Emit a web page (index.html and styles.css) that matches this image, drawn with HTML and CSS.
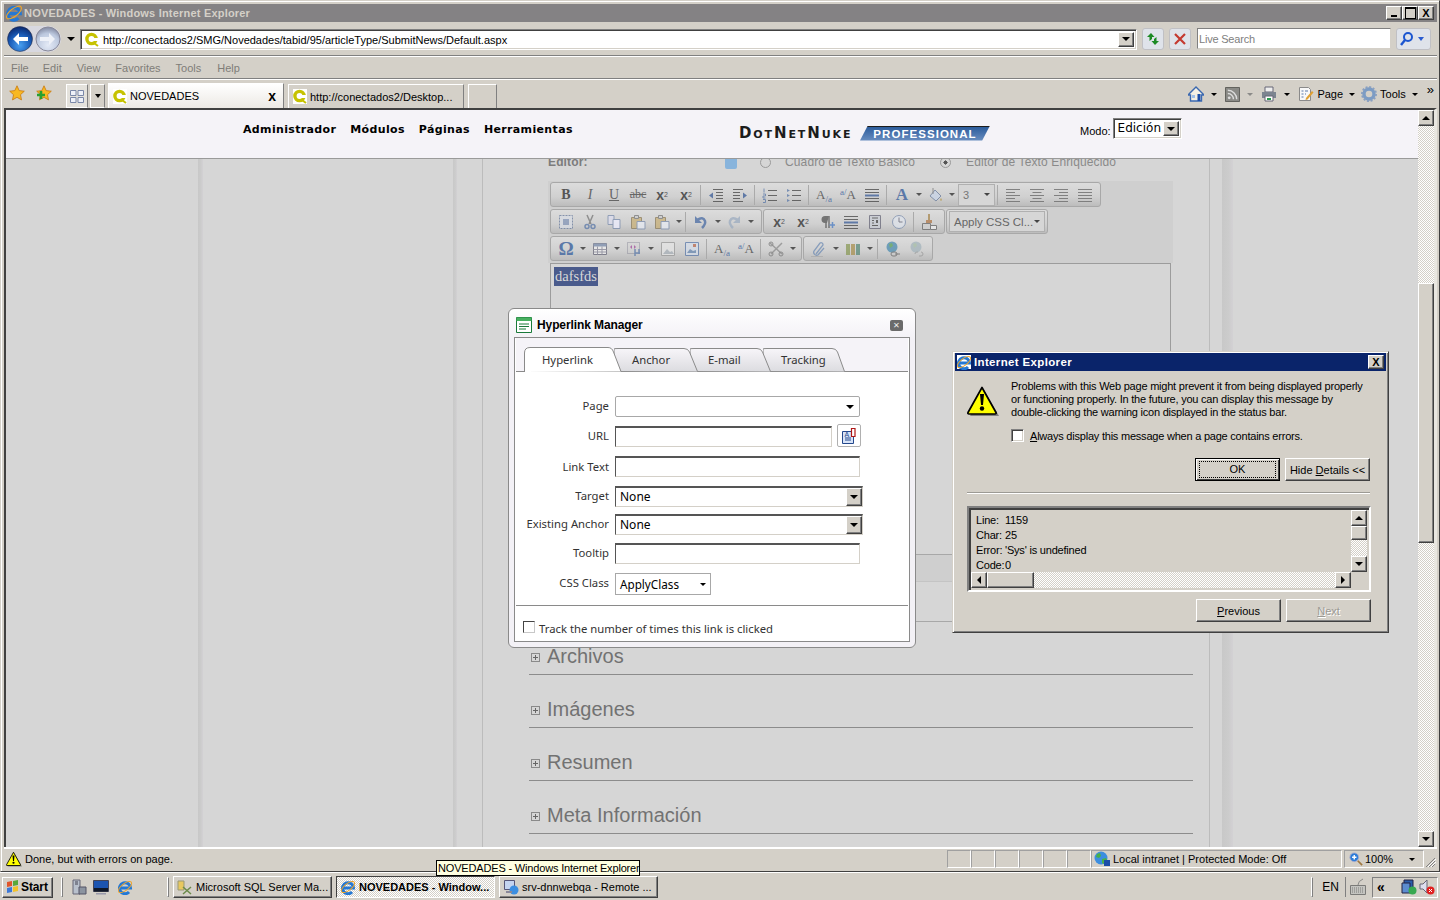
FILE: index.html
```html
<!DOCTYPE html>
<html lang="en">
<head>
    <meta charset="UTF-8">
    <title>NOVEDADES - Windows Internet Explorer</title>
    <link rel="stylesheet" href="styles.css">
</head>
<body>

<!-- icon sheet -->
<svg class="sprites" aria-hidden="true">
    <defs>
        <linearGradient id="tabfill" x1="0" y1="0" x2="0" y2="1"><stop offset="0" stop-color="#f7f5f9"/><stop offset="1" stop-color="#dcdce0"/></linearGradient>
        <radialGradient id="backfill" cx=".5" cy=".75" r=".7"><stop offset="0" stop-color="#4aa0f0"/><stop offset=".6" stop-color="#1a5cb8"/><stop offset="1" stop-color="#0c2f78"/></radialGradient>
        <radialGradient id="fwdfill" cx=".5" cy=".75" r=".7"><stop offset="0" stop-color="#e4eaf6"/><stop offset=".7" stop-color="#bcc8de"/><stop offset="1" stop-color="#8c94ac"/></radialGradient>
    </defs>
    <symbol id="ie" viewBox="0 0 16 16">
        <path d="M3.500 9h10A5.500 5.500 0 1 0 12 13" fill="none" stroke="#2478d4" stroke-width="3"/>
        <ellipse cx="8" cy="8" rx="8" ry="3.400" transform="rotate(-38 8 8)" fill="none" stroke="#eea42c" stroke-width="1"/>
    </symbol>
    <symbol id="fav" viewBox="0 0 14 15">
        <rect width="14" height="15" fill="#fff"/>
        <circle cx="6.500" cy="7" r="4.600" fill="#fff" stroke="#c6c200" stroke-width="3.400"/>
        <path d="M8 6h6v3H8z" fill="#fff"/>
        <path d="M9 11l4 3" stroke="#c6c200" stroke-width="2"/>
    </symbol>
    <symbol id="star" viewBox="0 0 16 16">
        <path d="M8 .8l2.200 4.800 5.100.6-3.800 3.500 1 5.200L8 12.300l-4.500 2.600 1-5.200L.7 6.200l5.100-.6z" fill="#f8b822" stroke="#c87810" stroke-width=".8"/>
    </symbol>
    <symbol id="warn" viewBox="0 0 32 32">
        <path d="M17 5L32 31H3z" fill="#808080"/>
        <path d="M15 2.500L29 27.500Q29.500 29 28 29H2Q.5 29 1 27.500z" fill="#ff0" stroke="#000" stroke-width="1.700" stroke-linejoin="round"/>
        <path d="M13 9h4l-1 11h-2z" fill="#000"/>
        <circle cx="15" cy="23.500" r="2.200" fill="#000"/>
    </symbol>
    <symbol id="globe" viewBox="0 0 16 16">
        <circle cx="7" cy="7" r="6.500" fill="#3c8ee0"/>
        <path d="M3 3l3-1 1 3-2 2-3-1zM8 8l4-1 1 2-3 4-2-1z" fill="#48b048"/>
        <path d="M10 9h6v6h-6z" fill="#1c4ea8"/>
    </symbol>
    <symbol id="l-left" viewBox="0 0 16 16"><path d="M1 2.500h14M1 5.500h9M1 8.500h14M1 11.500h9M1 14.500h14" stroke="#666"/></symbol>
    <symbol id="l-center" viewBox="0 0 16 16"><path d="M1 2.500h14M3.500 5.500h9M1 8.500h14M3.500 11.500h9M1 14.500h14" stroke="#666"/></symbol>
    <symbol id="l-right" viewBox="0 0 16 16"><path d="M1 2.500h14M6 5.500h9M1 8.500h14M6 11.500h9M1 14.500h14" stroke="#666"/></symbol>
    <symbol id="l-just" viewBox="0 0 16 16"><path d="M1 2.500h14M1 5.500h14M1 8.500h14M1 11.500h14M1 14.500h14" stroke="#666"/></symbol>
    <symbol id="outdent" viewBox="0 0 16 16"><path d="M5 2.500h10M8 5.500h7M8 8.500h7M8 11.500h7M5 14.500h10" stroke="#444"/><path d="M1 8.500l4-3v6z" fill="#3a5c98"/></symbol>
    <symbol id="indent" viewBox="0 0 16 16"><path d="M1 2.500h10M1 5.500h7M1 8.500h7M1 11.500h7M1 14.500h10" stroke="#444"/><path d="M15 8.500l-4-3v6z" fill="#3a5c98"/></symbol>
    <symbol id="ol" viewBox="0 0 16 16"><path d="M6 3.500h9M6 8.500h9M6 13.500h9" stroke="#444"/><path d="M2 1.500v4M1 7h2.500v2H1v2h2.500M1 12.500h2.500v3H1" stroke="#5a78a8" fill="none"/></symbol>
    <symbol id="ul" viewBox="0 0 16 16"><path d="M6 3.500h9M6 8.500h9M6 13.500h9" stroke="#444"/><path d="M1 2l3 1.500L1 5zM1 7l3 1.500L1 10zM1 12l3 1.500L1 15z" fill="#5a78a8"/></symbol>
    <symbol id="align-mid" viewBox="0 0 16 16"><path d="M1 2.500h14M1 5.500h14M1 11.500h14M1 14.500h14" stroke="#444"/><path d="M1 8.500h14" stroke="#3a5c98" stroke-width="2"/></symbol>
    <symbol id="fill" viewBox="0 0 16 16"><path d="M3 9l5-6 6 6-5 5z" fill="#c8d4e8" stroke="#6a7c9c"/><path d="M6 1v6" stroke="#777"/><path d="M14 11q2 2 0 3-2-1 0-3" fill="#b8a060"/></symbol>
    <symbol id="select-all" viewBox="0 0 16 16"><path d="M1.500 1.500h13v13h-13z" fill="#d8dce4" stroke="#6a7c9c" stroke-dasharray="2 1"/><path d="M5 5h6v6H5z" fill="#8496b8"/></symbol>
    <symbol id="cut" viewBox="0 0 16 16"><path d="M5 1l4 9M11 1L7 10" stroke="#777" stroke-width="1.500"/><circle cx="5" cy="12.500" r="2" fill="none" stroke="#5a78a8" stroke-width="1.500"/><circle cx="11" cy="12.500" r="2" fill="none" stroke="#5a78a8" stroke-width="1.500"/></symbol>
    <symbol id="copy" viewBox="0 0 16 16"><path d="M2 1.500h6v9H2z" fill="#dde" stroke="#7a8cac"/><path d="M7 5.500h7v9H7z" fill="#eef" stroke="#7a8cac"/></symbol>
    <symbol id="paste" viewBox="0 0 16 16"><path d="M1.500 3.500h10v11h-10z" fill="#c8b078" stroke="#8a7a58"/><path d="M4.500 1.500h4v3h-4z" fill="#ccc" stroke="#777"/><path d="M7 7.500h8v7.500H7z" fill="#e8ecf4" stroke="#7a8cac"/></symbol>
    <symbol id="undo" viewBox="0 0 16 16"><path d="M4 6q6-4 8 1 1 3-3 7" fill="none" stroke="#4a6ca4" stroke-width="2.500"/><path d="M2 2v7h7z" fill="#4a6ca4"/></symbol>
    <symbol id="redo" viewBox="0 0 16 16"><path d="M12 6q-6-4-8 1-1 3 3 7" fill="none" stroke="#9cacc0" stroke-width="2.500"/><path d="M14 2v7H7z" fill="#9cacc0"/></symbol>
    <symbol id="para" viewBox="0 0 16 16"><path d="M7 2v12M10 2v12" stroke="#555" stroke-width="1.500"/><path d="M10 2H6a3 3 0 0 0 0 7h2" fill="#555"/><path d="M13.500 8v6M10.500 11h6" stroke="#4a7cc4" stroke-width="1.500"/></symbol>
    <symbol id="doc5" viewBox="0 0 16 16"><path d="M2.500 1.500h11v13h-11z" fill="#c8ccd4" stroke="#667"/><path d="M5 4h6M5 6.500h2M5 9h2M5 11.500h6" stroke="#444"/><path d="M9 6h2v3H9z" fill="#444"/></symbol>
    <symbol id="clock" viewBox="0 0 16 16"><circle cx="8" cy="8" r="6.500" fill="#dfe4ec" stroke="#7a8cac"/><path d="M8 3.500V8h3.500" fill="none" stroke="#667"/></symbol>
    <symbol id="brush" viewBox="0 0 16 16"><path d="M7 0h2v6H7z" fill="#a88850"/><path d="M5 6h6v3H5z" fill="#b07848"/><path d="M1.500 9.500h8v6h-8z" fill="#d0d0d0" stroke="#666"/><path d="M9.500 11.500h6v4h-6z" fill="#eee" stroke="#666"/></symbol>
    <symbol id="table" viewBox="0 0 16 16"><path d="M1.500 2.500h13v11h-13z" fill="#eee" stroke="#667"/><path d="M1.500 2.500h13v3h-13z" fill="#7a8cac"/><path d="M1.500 8.500h13M1.500 11h13M5.500 5.500v8M10 5.500v8" stroke="#889"/></symbol>
    <symbol id="flash" viewBox="0 0 16 16"><path d="M1.500 1.500h12v11h-12z" fill="none" stroke="#778" stroke-dasharray="1 1"/><path d="M4 6l2-2v4zM10 6L8 4v4z" fill="#a04c9c"/><path d="M9 8v7M9 12h5M13 8v5" stroke="#5a78a8" stroke-width="1.500"/></symbol>
    <symbol id="image" viewBox="0 0 16 16"><path d="M1.500 1.500h13v13h-13z" fill="#e4e4e4" stroke="#999"/><path d="M3 13l4-5 3 3 2-1 2 3z" fill="#a8b0b8"/></symbol>
    <symbol id="imagemap" viewBox="0 0 16 16"><path d="M1.500 1.500h13v13h-13z" fill="#d4dce8" stroke="#5a78a8"/><path d="M3 12l3-4 3 2 3-1v3z" fill="#6888b0"/><path d="M9 3h3v3H9z" fill="#b86a50"/></symbol>
    <symbol id="tools" viewBox="0 0 16 16"><path d="M2 2l12 11M14 2L3 13" stroke="#8a8a8a" stroke-width="1.500"/><circle cx="3" cy="3" r="2" fill="none" stroke="#777"/><circle cx="3" cy="13" r="2" fill="none" stroke="#777"/><circle cx="13" cy="13" r="2" fill="none" stroke="#777"/></symbol>
    <symbol id="clip" viewBox="0 0 16 16"><path d="M5 13l7-9a2 2 0 0 0-3-2L3 10a3 3 0 0 0 4 4l6-7" fill="none" stroke="#6f8cb4" stroke-width="1.300"/><path d="M0 15.500h12" stroke="#aaa"/></symbol>
    <symbol id="books" viewBox="0 0 16 16"><path d="M1 3h4v11H1z" fill="#8a9a58"/><path d="M6 3h4v11H6z" fill="#a89050"/><path d="M11 3h4v11h-4z" fill="#5a8a78"/></symbol>
    <symbol id="link" viewBox="0 0 16 16"><circle cx="7" cy="6" r="5.500" fill="#4c8cb0"/><path d="M4 3l3-1 1 3-3 2z" fill="#58a058"/><path d="M6 13a2 2 0 0 1 2-2h2a2 2 0 0 1 0 4H8a2 2 0 0 1-2-2zM10 13h5" fill="none" stroke="#666"/></symbol>
    <symbol id="unlink" viewBox="0 0 16 16"><circle cx="7" cy="6" r="5.500" fill="#a4b4bc"/><path d="M4 3l3-1 1 3-3 2z" fill="#a4bca4"/><path d="M6 13a2 2 0 0 1 2-2h1M12 11a2 2 0 0 1 0 4h-2" fill="none" stroke="#999"/></symbol>
</svg>

<div class="ie-window">
    <div class="titlebar">
        <svg class="title-logo"><use href="#ie"/></svg>
        <span class="title-text">NOVEDADES - Windows Internet Explorer</span>
        <div class="title-buttons">
            <span class="win-btn win-min"></span>
            <span class="win-btn win-max"></span>
            <span class="win-btn">X</span>
        </div>
    </div>

    <div class="addressbar">
        <svg class="nav-buttons" viewBox="0 0 56 28" width="56" height="28">
            <path d="M14 1h28a13 13 0 0 1 0 26H14a13 13 0 0 1 0-26z" fill="#d8d8e0"/>
            <circle cx="14" cy="14" r="12.500" fill="url(#backfill)" stroke="#223" stroke-width=".5"/>
            <path d="M7 14l6-6v4h9v4h-9v4z" fill="#fff"/>
            <circle cx="42" cy="14" r="12" fill="url(#fwdfill)" stroke="#889"/>
            <path d="M49 14l-6-6v4h-9v4h9v4z" fill="#eef1f8"/>
        </svg>
        <span class="caret nav-caret"></span>
        <div class="address-field sunken">
            <svg class="favicon"><use href="#fav"/></svg>
            <span class="address-text">http://conectados2/SMG/Novedades/tabid/95/articleType/SubmitNews/Default.aspx</span>
            <span class="combo-btn"><span class="caret"></span></span>
        </div>
        <span class="pale-btn">
            <svg viewBox="0 0 16 16" width="16" height="16"><path d="M6 2L2 6h2.500v4L7 8V6h2.500zM10 14l4-4h-2.500V6L9 8v2H6.500z" fill="#1c8a24"/></svg>
        </span>
        <span class="pale-btn">
            <svg viewBox="0 0 16 16" width="16" height="16"><path d="M3 3l10 10M13 3L3 13" stroke="#c43a30" stroke-width="2.200"/></svg>
        </span>
        <div class="search-field sunken">Live Search</div>
        <span class="pale-btn search-btn">
            <svg viewBox="0 0 16 16" width="16" height="16"><circle cx="9" cy="6" r="4" fill="none" stroke="#1c56d0" stroke-width="2"/><path d="M6 9l-4 5" stroke="#1c56d0" stroke-width="2.400"/></svg>
            <span class="caret caret-blue"></span>
        </span>
    </div>

    <div class="menubar">
        <span class="menu-item">File</span>
        <span class="menu-item">Edit</span>
        <span class="menu-item">View</span>
        <span class="menu-item">Favorites</span>
        <span class="menu-item">Tools</span>
        <span class="menu-item">Help</span>
    </div>

    <div class="commandbar">
        <svg class="fav-star"><use href="#star"/></svg>
        <svg class="fav-add" viewBox="0 0 16 16">
            <use href="#star"/>
            <path d="M1 10h8M5 6v8" stroke="#28a030" stroke-width="2.600"/>
        </svg>
        <span class="quick-tabs">
            <svg viewBox="0 0 16 16" width="16" height="16"><path d="M1.500 2.500h5.500v5H1.500zM9 2.500h5.500v5H9zM1.500 9.500h5.500v5H1.500zM9 9.500h5.500v5H9z" fill="#eef1f8" stroke="#7a88a8"/></svg>
        </span>
        <span class="quick-drop"><span class="caret"></span></span>
        <div class="tab tab-on">
            <svg class="favicon"><use href="#fav"/></svg>
            <span class="tab-title">NOVEDADES</span>
            <span class="tab-close">x</span>
        </div>
        <div class="tab">
            <svg class="favicon"><use href="#fav"/></svg>
            <span class="tab-title">http://conectados2/Desktop...</span>
        </div>
        <div class="tab tab-new"></div>

        <div class="cmd-tools">
            <svg class="cmd-ico cmd-home" viewBox="0 0 16 16"><path d="M8 1L0 9h2.500v6h11V9H16z" fill="#f4f0e4" stroke="#3a68b0" stroke-width="1.400"/><path d="M9.500 8h3v7h-3z" fill="#1c4ea8"/><path d="M4 9h3v3H4z" fill="#a0c0e8"/></svg>
            <span class="caret cmd-caret"></span>
            <svg class="cmd-ico cmd-feed" viewBox="0 0 16 16"><path d="M.5.5h15v15H.5z" fill="#8a8a86" stroke="#5c5c58"/><circle cx="4.500" cy="11.500" r="1.500" fill="#ddd"/><path d="M3 7a6 6 0 0 1 6 6M3 3.500a9.500 9.500 0 0 1 9.500 9.500" fill="none" stroke="#ddd" stroke-width="1.500"/></svg>
            <span class="caret cmd-caret caret-dim"></span>
            <svg class="cmd-ico cmd-print" viewBox="0 0 16 16"><path d="M4 1h8v5H4z" fill="#eee" stroke="#667"/><path d="M1 6h14v6H1z" fill="#7c8490"/><path d="M4 10h8v5H4z" fill="#fff" stroke="#667"/><path d="M6 13h4" stroke="#2a9a50" stroke-width="2"/></svg>
            <span class="caret cmd-caret"></span>
            <svg class="cmd-ico cmd-page" viewBox="0 0 16 16"><path d="M1.500 1.500h9l2 2v11h-11z" fill="#f8f8f8" stroke="#8a8a8a"/><path d="M3.500 5h2M3.500 8h2M3.500 11h2M7 5h3M7 8h1" stroke="#5a78a8"/><path d="M8 12l6-7 1.500 1.500-6 7-2 .5z" fill="#e0a030"/></svg>
            <span class="cmd-label">Page</span>
            <span class="caret cmd-caret"></span>
            <svg class="cmd-ico cmd-gear" viewBox="0 0 16 16"><circle cx="8" cy="8" r="5" fill="none" stroke="#7c9cc4" stroke-width="3.400"/><circle cx="8" cy="8" r="7" fill="none" stroke="#8aa0c0" stroke-width="2" stroke-dasharray="2 1.660"/></svg>
            <span class="cmd-label">Tools</span>
            <span class="caret cmd-caret"></span>
            <span class="cmd-more">»</span>
        </div>
    </div>

    <div class="viewport">
        <div class="viewport-main">
            <div class="site-header">
                <nav class="site-nav">
                    <span>Administrador</span>
                    <span>Módulos</span>
                    <span>Páginas</span>
                    <span>Herramientas</span>
                </nav>
                <div class="site-logo">
                    <span class="logo-dnn">DotNetNuke</span>
                    <span class="logo-pro"><span class="logo-pro-text">PROFESSIONAL</span></span>
                </div>
                <div class="mode-picker">
                    <span class="mode-label">Modo:</span>
                    <div class="mode-select sunken">
                        <span class="mode-value">Edición</span>
                        <span class="combo-btn"><span class="caret"></span></span>
                    </div>
                </div>
            </div>

            <div class="page">
                <div class="page-col"></div>
                <div class="page-band"></div>
                <div class="page-col"></div>
                <div class="page-band"></div>
                <div class="page-col"></div>
                <div class="page-content">
                    <div class="editor-choice">
                        <span class="choice-label">Editor:</span>
                        <span class="help-ico"></span>
                        <span class="radio"></span>
                        <span class="choice-text">Cuadro de Texto Básico</span>
                        <span class="radio radio-on"></span>
                        <span class="choice-text">Editor de Texto Enriquecido</span>
                    </div>

                    <div class="editor-toolbars">
                        <div class="tb-row">
                            <div class="tb-group">
                                <span class="tb-btn tb-bold">B</span>
                                <span class="tb-btn tb-ital">I</span>
                                <span class="tb-btn tb-under">U</span>
                                <span class="tb-btn tb-strike">abc</span>
                                <span class="tb-btn tb-script">x<sup>2</sup></span>
                                <span class="tb-btn tb-script">x<sub>2</sub></span>
                                <span class="tb-sep"></span>
                                <span class="tb-btn"><svg><use href="#outdent"/></svg></span>
                                <span class="tb-btn"><svg><use href="#indent"/></svg></span>
                                <span class="tb-sep"></span>
                                <span class="tb-btn"><svg><use href="#ol"/></svg></span>
                                <span class="tb-btn"><svg><use href="#ul"/></svg></span>
                                <span class="tb-sep"></span>
                                <span class="tb-btn tb-fract">A<small class="fract-low">/a</small></span>
                                <span class="tb-btn tb-fract"><small class="fract-high">a/</small>A</span>
                                <span class="tb-btn"><svg><use href="#align-mid"/></svg></span>
                                <span class="tb-sep"></span>
                                <span class="tb-btn tb-color">A</span>
                                <span class="tb-arrow"><span class="caret"></span></span>
                                <span class="tb-btn"><svg><use href="#fill"/></svg></span>
                                <span class="tb-arrow"><span class="caret"></span></span>
                                <span class="tb-size">3<span class="caret"></span></span>
                                <span class="tb-sep"></span>
                                <span class="tb-btn"><svg><use href="#l-left"/></svg></span>
                                <span class="tb-btn"><svg><use href="#l-center"/></svg></span>
                                <span class="tb-btn"><svg><use href="#l-right"/></svg></span>
                                <span class="tb-btn"><svg><use href="#l-just"/></svg></span>
                            </div>
                        </div>
                        <div class="tb-row">
                            <div class="tb-group tb-edit">
                                <span class="tb-btn"><svg><use href="#select-all"/></svg></span>
                                <span class="tb-btn"><svg><use href="#cut"/></svg></span>
                                <span class="tb-btn"><svg><use href="#copy"/></svg></span>
                                <span class="tb-btn"><svg><use href="#paste"/></svg></span>
                                <span class="tb-btn"><svg><use href="#paste"/></svg></span>
                                <span class="tb-arrow"><span class="caret"></span></span>
                                <span class="tb-sep"></span>
                                <span class="tb-btn"><svg><use href="#undo"/></svg></span>
                                <span class="tb-arrow"><span class="caret"></span></span>
                                <span class="tb-btn"><svg><use href="#redo"/></svg></span>
                                <span class="tb-arrow"><span class="caret caret-dim"></span></span>
                            </div>
                            <div class="tb-group">
                                <span class="tb-btn tb-script">x<sup>2</sup></span>
                                <span class="tb-btn tb-script">x<sub>2</sub></span>
                                <span class="tb-btn"><svg><use href="#para"/></svg></span>
                                <span class="tb-btn"><svg><use href="#align-mid"/></svg></span>
                                <span class="tb-btn"><svg><use href="#doc5"/></svg></span>
                                <span class="tb-btn"><svg><use href="#clock"/></svg></span>
                                <span class="tb-sep"></span>
                                <span class="tb-btn"><svg><use href="#brush"/></svg></span>
                            </div>
                            <div class="tb-group tb-css">
                                <span class="tb-css-select">Apply CSS Cl...<span class="caret"></span></span>
                            </div>
                        </div>
                        <div class="tb-row tb-row3">
                            <div class="tb-group">
                                <span class="tb-btn tb-omega">Ω</span>
                                <span class="tb-arrow"><span class="caret"></span></span>
                                <span class="tb-btn"><svg><use href="#table"/></svg></span>
                                <span class="tb-arrow"><span class="caret"></span></span>
                                <span class="tb-btn"><svg><use href="#flash"/></svg></span>
                                <span class="tb-arrow"><span class="caret"></span></span>
                                <span class="tb-btn"><svg><use href="#image"/></svg></span>
                                <span class="tb-btn"><svg><use href="#imagemap"/></svg></span>
                                <span class="tb-sep"></span>
                                <span class="tb-btn tb-fract">A<small class="fract-low">/a</small></span>
                                <span class="tb-btn tb-fract"><small class="fract-high">a/</small>A</span>
                                <span class="tb-sep"></span>
                                <span class="tb-btn"><svg><use href="#tools"/></svg></span>
                                <span class="tb-arrow"><span class="caret"></span></span>
                            </div>
                            <div class="tb-group">
                                <span class="tb-btn"><svg><use href="#clip"/></svg></span>
                                <span class="tb-arrow"><span class="caret"></span></span>
                                <span class="tb-btn"><svg><use href="#books"/></svg></span>
                                <span class="tb-arrow"><span class="caret"></span></span>
                                <span class="tb-sep"></span>
                                <span class="tb-btn"><svg><use href="#link"/></svg></span>
                                <span class="tb-btn"><svg><use href="#unlink"/></svg></span>
                            </div>
                        </div>
                    </div>

                    <div class="editor-area"><span class="editor-selection">dafsfds</span></div>
                    <div class="editor-foot"></div>
                    <div class="editor-gap"></div>

                    <div class="section"><span class="section-plus"></span><span class="section-title">Archivos</span></div>
                    <div class="section"><span class="section-plus"></span><span class="section-title">Imágenes</span></div>
                    <div class="section"><span class="section-plus"></span><span class="section-title">Resumen</span></div>
                    <div class="section"><span class="section-plus"></span><span class="section-title">Meta Información</span></div>
                </div>
                <div class="page-col"></div>
                <div class="page-band page-band-wide"></div>
                <div class="page-col"></div>
            </div>
        </div>

        <div class="scrollbar dither">
            <span class="btn-3d scroll-btn"><span class="caret caret-up"></span></span>
            <span class="btn-3d scroll-thumb"></span>
            <span class="btn-3d scroll-btn"><span class="caret"></span></span>
        </div>
    </div>

    <div class="statusbar">
        <svg class="status-warn"><use href="#warn"/></svg>
        <span class="status-text">Done, but with errors on page.</span>
        <span class="status-cell"></span>
        <span class="status-cell"></span>
        <span class="status-cell"></span>
        <span class="status-cell"></span>
        <span class="status-cell"></span>
        <span class="status-cell"></span>
        <span class="status-zone">
            <svg class="status-globe"><use href="#globe"/></svg>
            <span>Local intranet | Protected Mode: Off</span>
        </span>
        <span class="status-zoom">
            <svg class="status-mag" viewBox="0 0 16 16"><circle cx="6" cy="6" r="5" fill="#2c7cd8" stroke="#aac"/><path d="M3.500 6h5M6 3.500v5" stroke="#fff" stroke-width="1.600"/><path d="M10 10l5 5" stroke="#a07840" stroke-width="2"/></svg>
            <span>100%</span>
            <span class="caret status-caret"></span>
        </span>
        <svg class="status-grip" viewBox="0 0 12 12"><path d="M11 2L2 11M11 5l-6 6M11 8l-3 3" stroke="#808080"/><path d="M12 3l-8 8M12 6l-5 5" stroke="#fff"/></svg>
    </div>
</div>

<div class="taskbar">
    <div class="start-btn btn-3d">
        <svg class="start-flag" viewBox="0 0 16 16"><path d="M2 3l5-1v5l-5 1z" fill="#e0552a"/><path d="M8 2l5-1v5l-5 1z" fill="#58a83a"/><path d="M2 9l5-1v5l-5 1z" fill="#3c78d8"/><path d="M8 8l5-1v5l-5 1z" fill="#f2c22a"/></svg>
        <span>Start</span>
    </div>
    <span class="task-divider"></span>
    <svg class="ql-ico ql-server" viewBox="0 0 16 16"><path d="M2 1h7v14H2z" fill="#b8c0cc" stroke="#667"/><path d="M8 8h7v7H8z" fill="#8c94a0" stroke="#556"/><path d="M4 3h3M4 5h3" stroke="#445"/></svg>
    <svg class="ql-ico ql-desk" viewBox="0 0 16 16"><path d="M.5 1.500h15v11H.500z" fill="#1c54b0" stroke="#445"/><path d="M1 9h14v3.500H1z" fill="#101828"/><path d="M3 14h10v1.500H3z" fill="#99a"/></svg>
    <svg class="ql-ico ql-ie"><use href="#ie"/></svg>
    <span class="task-divider task-divider-2"></span>
    <div class="task-btn btn-3d">
        <svg class="task-ico" viewBox="0 0 16 16"><path d="M1 2h6v9H1z" fill="#e8c860" stroke="#997"/><path d="M6 8l8 7M14 8l-8 7" stroke="#6a8a4a" stroke-width="1.500"/></svg>
        <span class="task-label">Microsoft SQL Server Ma...</span>
    </div>
    <div class="task-btn task-on dither">
        <svg class="task-ico"><use href="#ie"/></svg>
        <span class="task-label">NOVEDADES - Window...</span>
    </div>
    <div class="task-btn btn-3d">
        <svg class="task-ico" viewBox="0 0 16 16"><path d="M1.500 1.500h10v9h-10z" fill="#c4d4f0" stroke="#557"/><circle cx="11" cy="11" r="4.500" fill="#3c8ee0"/><path d="M3 13h6" stroke="#889" stroke-width="2"/></svg>
        <span class="task-label">srv-dnnwebqa - Remote ...</span>
    </div>
    <div class="tray">
        <span class="task-divider"></span>
        <span class="tray-lang">EN</span>
        <span class="tray-line"></span>
        <svg class="tray-kbd" viewBox="0 0 18 18"><path d="M1.500 7.500h15v9h-15z" fill="#c4c4c0" stroke="#7a7a78"/><path d="M3 10h12M3 12h12M3 14h12" stroke="#7a7a78" stroke-dasharray="1 1"/><path d="M9 7q0-4 5-6" fill="none" stroke="#8a8a88"/></svg>
        <div class="tray-box">
            <span class="tray-more">«</span>
            <svg class="tray-ico" viewBox="0 0 16 16"><path d="M3 1h9v10H3z" fill="#2c5ca8" stroke="#224"/><path d="M1 4h8v10H1z" fill="#5c8cd0" stroke="#224"/><circle cx="11.500" cy="11.500" r="4" fill="#38a850"/></svg>
            <svg class="tray-ico" viewBox="0 0 16 16"><path d="M1 5h3l4-4v13L4 10H1z" fill="#dde" stroke="#667"/><circle cx="11.500" cy="11.500" r="4" fill="#e02020"/><path d="M10 10l3 3M13 10l-3 3" stroke="#fff"/></svg>
        </div>
    </div>
</div>

<div class="tooltip">NOVEDADES - Windows Internet Explorer</div>

<!-- Hyperlink Manager -->
<div class="link-manager">
    <div class="lm-head">
        <svg class="lm-ico" viewBox="0 0 16 16"><path d="M.5.5h15v15H.5z" fill="#fff" stroke="#1a7a3a"/><path d="M.5.500h15V4H.500z" fill="#48b060"/><path d="M3 7h10M3 9.500h10M3 12h7" stroke="#1a7a3a"/></svg>
        <span class="lm-title">Hyperlink Manager</span>
        <span class="lm-close">×</span>
    </div>
    <div class="lm-body">
        <div class="lm-tabs">
            <div class="lm-tab lm-tab-on lm-tab-1">
                <svg width="98" height="25"><path d="M.5 25V6Q.5 .5 6 .5H84Q88 .5 89.500 5L97 24.500" fill="#fff" stroke="#8a8a8a"/></svg>
                <span>Hyperlink</span>
            </div>
            <div class="lm-tab lm-tab-2">
                <svg width="84" height="25"><path d="M0 24V2Q0 1.500 4 1.500H70Q74 1.500 75.500 5L83.500 24.500" fill="url(#tabfill)" stroke="#8a8a8a"/></svg>
                <span>Anchor</span>
            </div>
            <div class="lm-tab lm-tab-3">
                <svg width="81" height="25"><path d="M0 24V2Q0 1.500 4 1.500H67Q71 1.500 72.500 5L80.500 24.500" fill="url(#tabfill)" stroke="#8a8a8a"/></svg>
                <span>E-mail</span>
            </div>
            <div class="lm-tab lm-tab-4">
                <svg width="82" height="25"><path d="M0 24V2Q0 1.500 4 1.500H69Q73 1.500 74.500 5L81.500 24.500" fill="url(#tabfill)" stroke="#8a8a8a"/></svg>
                <span>Tracking</span>
            </div>
        </div>

        <div class="lm-form">
            <div class="lm-row lm-row-page">
                <label>Page</label>
                <div class="lm-combo lm-wide"><span class="caret"></span></div>
            </div>
            <div class="lm-row lm-row-url">
                <label>URL</label>
                <div class="lm-input lm-url sunken-light"></div>
                <span class="lm-doc-btn">
                    <svg viewBox="0 0 18 18" width="18" height="18"><path d="M2.500 4.500h11v12h-11z" fill="#d8e4f8" stroke="#23488c"/><path d="M5 11h6M5 13h6" stroke="#23488c"/><text x="4.500" y="10" class="lm-doc-a">A</text><path d="M11.500 1.500h3.500v8h-3.500z" fill="#fff" stroke="#b01818" stroke-width="1.200"/></svg>
                </span>
            </div>
            <div class="lm-row lm-row-text">
                <label>Link Text</label>
                <div class="lm-input lm-wide sunken-light"></div>
            </div>
            <div class="lm-row lm-row-target">
                <label>Target</label>
                <div class="lm-select sunken-light">None<span class="combo-btn"><span class="caret"></span></span></div>
            </div>
            <div class="lm-row lm-row-anchor">
                <label>Existing Anchor</label>
                <div class="lm-select sunken-light">None<span class="combo-btn"><span class="caret"></span></span></div>
            </div>
            <div class="lm-row lm-row-tip">
                <label>Tooltip</label>
                <div class="lm-input lm-wide sunken-light"></div>
            </div>
            <div class="lm-row lm-row-css">
                <label>CSS Class</label>
                <div class="lm-cssclass">ApplyClass<span class="caret"></span></div>
            </div>
        </div>

        <div class="lm-foot">
            <span class="lm-check"></span>
            <span>Track the number of times this link is clicked</span>
        </div>
    </div>
</div>

<!-- script error dialog -->
<div class="error-dialog">
    <div class="ed-title">
        <svg class="ed-logo" viewBox="0 0 16 16"><rect x="1" y="1" width="14" height="14" fill="#fff"/><use href="#ie" width="16" height="16"/></svg>
        <span>Internet Explorer</span>
        <span class="win-btn ed-close">X</span>
    </div>
    <div class="ed-main">
        <svg class="ed-warn"><use href="#warn"/></svg>
        <div class="ed-message">
            <p>Problems with this Web page might prevent it from being displayed properly or functioning properly. In the future, you can display this message by double-clicking the warning icon displayed in the status bar.</p>
            <div class="ed-check-row">
                <span class="ed-check"></span>
                <span><u>A</u>lways display this message when a page contains errors.</span>
            </div>
        </div>
    </div>
    <div class="ed-actions">
        <span class="ed-btn ed-btn-default"><span class="ed-focus">OK</span></span>
        <span class="ed-btn btn-3d"><span>Hide <u>D</u>etails &lt;&lt;</span></span>
    </div>
    <div class="ed-rule"></div>
    <div class="ed-details">
        <div class="ed-lines">
            <div class="ed-line"><span class="ed-key">Line:</span>1159</div>
            <div class="ed-line"><span class="ed-key">Char:</span>25</div>
            <div class="ed-line"><span class="ed-key">Error:</span>'Sys' is undefined</div>
            <div class="ed-line"><span class="ed-key">Code:</span>0</div>
        </div>
        <div class="ed-vscroll dither">
            <span class="btn-3d scroll-btn"><span class="caret caret-up"></span></span>
            <span class="btn-3d ed-vthumb"></span>
            <span class="btn-3d scroll-btn ed-vdown"><span class="caret"></span></span>
        </div>
        <div class="ed-hscroll dither">
            <span class="btn-3d scroll-btn"><span class="caret caret-left"></span></span>
            <span class="btn-3d ed-hthumb"></span>
            <span class="btn-3d scroll-btn ed-hright"><span class="caret caret-right"></span></span>
        </div>
    </div>
    <div class="ed-actions ed-actions-nav">
        <span class="ed-btn btn-3d"><span><u>P</u>revious</span></span>
        <span class="ed-btn btn-3d ed-disabled"><span><u>N</u>ext</span></span>
    </div>
</div>

</body>
</html>
```

FILE: styles.css
```css
* {
    box-sizing: border-box;
}
html, body {
    margin: 0;
    height: 100%;
}
body {
    position: relative;
    width: 1440px;
    height: 900px;
    overflow: hidden;
    background: #d4d0c8;
    font-family: "Liberation Sans", Arial, sans-serif;
    font-size: 11px;
    color: #000;
}
.sprites {
    position: absolute;
    width: 0;
    height: 0;
}

/* shared windows 2000 bits */
.btn-3d {
    background: #d4d0c8;
    border: 1px solid;
    border-color: #fff #404040 #404040 #fff;
    box-shadow: inset -1px -1px 0 #808080;
}
.sunken {
    background: #fff;
    border: 1px solid;
    border-color: #808080 #fff #fff #808080;
    box-shadow: inset 1px 1px 0 #404040, inset -1px -1px 0 #d4d0c8;
}
.dither {
    background: conic-gradient(#fff 25%, #d4d0c8 0 50%, #fff 0 75%, #d4d0c8 0) 0 0 / 2px 2px;
}
.caret {
    display: inline-block;
    width: 0;
    height: 0;
    border-left: 4px solid transparent;
    border-right: 4px solid transparent;
    border-top: 4px solid #000;
}
.caret-up {
    border-top: 0;
    border-bottom: 4px solid #000;
}
.caret-left {
    border: 4px solid transparent;
    border-left: 0;
    border-right: 4px solid #000;
}
.caret-right {
    border: 4px solid transparent;
    border-right: 0;
    border-left: 4px solid #000;
}
.caret-dim {
    border-top-color: #8a8a88;
}
.caret-blue {
    border-top-color: #2a5cd0;
    border-left-width: 3px;
    border-right-width: 3px;
}
.combo-btn {
    display: flex;
    align-items: center;
    justify-content: center;
    width: 16px;
    background: #d4d0c8;
    border: 1px solid;
    border-color: #fff #404040 #404040 #fff;
    box-shadow: inset -1px -1px 0 #808080;
}

/* browser window */
.ie-window {
    height: 872px;
    padding: 3px 2px 0 3px;
    border: 1px solid;
    border-color: #d4d0c8 #404040 #404040 #d4d0c8;
    box-shadow: inset 1px 1px 0 #fff;
}
.titlebar {
    display: flex;
    align-items: center;
    height: 18px;
    background: #848284;
    color: #d4d0c8;
    font-size: 11px;
    font-weight: bold;
}
.title-logo {
    flex: none;
    width: 18px;
    height: 19px;
    margin: -2px 1px 0 1px;
}
.title-text {
    letter-spacing: 0.2px;
}
.title-buttons {
    display: flex;
    gap: 0;
    margin-left: auto;
    margin-right: 3px;
}
.win-btn {
    display: flex;
    align-items: center;
    justify-content: center;
    width: 16px;
    height: 14px;
    background: #d4d0c8;
    border: 1px solid;
    border-color: #fff #404040 #404040 #fff;
    box-shadow: inset -1px -1px 0 #808080;
    color: #000;
    font-size: 11px;
    font-weight: bold;
    line-height: 1;
}
.win-min::after {
    content: "";
    width: 6px;
    height: 2px;
    background: #000;
    margin-top: 6px;
}
.win-max::after {
    content: "";
    width: 9px;
    height: 9px;
    border: 1px solid #000;
    border-top-width: 2px;
}

.addressbar {
    display: flex;
    align-items: center;
    height: 34px;
    padding: 0 0 0 2px;
    border-bottom: 1px solid #808080;
}
.nav-buttons {
    flex: none;
}
.nav-caret {
    margin: 0 5px 0 5px;
}
.address-field {
    display: flex;
    align-items: stretch;
    width: 1057px;
    height: 21px;
    margin-top: 1px;
    padding: 2px;
}
.favicon {
    flex: none;
    width: 14px;
    height: 15px;
}
.address-field .favicon {
    margin: 0 4px 0 2px;
}
.address-text {
    flex: 1;
    line-height: 17px;
}
.pale-btn {
    display: flex;
    align-items: center;
    justify-content: center;
    width: 22px;
    height: 22px;
    margin-left: 5px;
    background: #dfe3ea;
    border: 1px solid #c0c0c4;
    border-radius: 3px;
}
.search-field {
    width: 194px;
    height: 21px;
    margin-left: 6px;
    padding-left: 1px;
    border-color: #808080 #d4d0c8 #d4d0c8 #808080;
    box-shadow: none;
    color: #808080;
    letter-spacing: -0.2px;
    line-height: 20px;
}
.search-btn {
    width: 35px;
    justify-content: flex-start;
    gap: 3px;
    padding-left: 2px;
}

.menubar {
    display: flex;
    align-items: center;
    height: 23px;
    padding-left: 7px;
    border-top: 1px solid #fff;
    border-bottom: 1px solid #808080;
    color: #7f7d78;
}
.menu-item {
    margin-right: 14px;
}
.menu-item:nth-child(2) { margin-right: 15px; }
.menu-item:nth-child(3) { margin-right: 15px; }
.menu-item:nth-child(4) { margin-right: 15px; }
.menu-item:nth-child(5) { margin-right: 16px; }

.commandbar {
    display: flex;
    align-items: flex-end;
    height: 29px;
    padding-left: 5px;
    border-top: 1px solid #fff;
}
.fav-star,
.fav-add {
    flex: none;
    width: 16px;
    height: 16px;
    align-self: flex-start;
    margin-top: 5px;
}
.fav-add {
    margin-left: 11px;
}
.quick-tabs {
    display: flex;
    align-items: center;
    justify-content: center;
    width: 22px;
    height: 24px;
    margin-left: 14px;
    background: #e4e2dc;
    border: 1px solid #fff;
    border-right-color: #808080;
}
.quick-drop {
    display: flex;
    align-items: center;
    justify-content: center;
    width: 15px;
    height: 24px;
    margin-left: 2px;
    border: 1px solid #fff;
    border-right-color: #808080;
}
.quick-drop .caret {
    border-left-width: 3px;
    border-right-width: 3px;
}
.tab {
    display: flex;
    align-items: center;
    width: 176px;
    height: 24px;
    margin-left: 4px;
    padding-left: 4px;
    border: 1px solid #fff;
    border-bottom: 0;
    border-right-color: #808080;
}
.tab .favicon {
    margin-right: 3px;
}
.tab-on {
    height: 25px;
    margin-left: 3px;
    background: linear-gradient(#fff, #ece9e4);
}
.tab-title {
    flex: 1;
}
.tab-close {
    margin-right: 7px;
    font-size: 14px;
    font-weight: bold;
    line-height: 1;
}
.tab-new {
    width: 29px;
}
.cmd-tools {
    display: flex;
    align-items: center;
    align-self: flex-start;
    height: 22px;
    margin-top: 3px;
    margin-left: auto;
    padding-right: 3px;
}
.cmd-ico {
    flex: none;
    width: 16px;
    height: 16px;
}
.cmd-feed {
    width: 15px;
    height: 15px;
}
.cmd-caret {
    margin: 0 8px 0 7px;
    border-left-width: 3px;
    border-right-width: 3px;
    border-top-width: 3px;
}
.cmd-label {
    margin-left: 3px;
}
.cmd-label + .cmd-caret {
    margin-left: 6px;
    margin-right: 6px;
}
.cmd-more {
    align-self: flex-start;
    margin-left: 3px;
    font-size: 13px;
    line-height: 13px;
}

/* page area */
.viewport {
    display: flex;
    height: 739px;
    border-top: 2px solid #404040;
    border-left: 2px solid #404040;
    border-right: 3px solid #e8e6e0;
}
.viewport-main {
    display: flex;
    flex-direction: column;
    width: 1412px;
    min-width: 0;
}
.site-header {
    display: flex;
    flex: none;
    height: 49px;
    background: #f5f3f8;
    border-bottom: 1px solid #9a9a9a;
}
.site-nav {
    display: flex;
    gap: 14px;
    width: 490px;
    margin-left: 237px;
    padding-top: 13px;
    font-family: "DejaVu Sans", sans-serif;
    font-size: 11px;
    font-weight: bold;
    letter-spacing: 0.35px;
}
.site-nav span {
    line-height: 14px;
}
.site-logo {
    display: flex;
    flex: none;
    align-items: center;
    height: 16px;
    margin: 15px 0 0 6px;
}
.logo-dnn {
    width: 121px;
    color: #1c1c1c;
    font-family: "DejaVu Sans", sans-serif;
    font-size: 15px;
    font-variant: small-caps;
    font-weight: bold;
    letter-spacing: 1.9px;
    white-space: nowrap;
}
.logo-pro {
    display: flex;
    align-items: center;
    justify-content: center;
    width: 130px;
    height: 15px;
    background: linear-gradient(#2c5c9c, #6a8ec0);
    border-top: 1px solid #1c1c1c;
    clip-path: polygon(6% 0, 100% 0, 94% 100%, 0 100%);
}
.logo-pro-text {
    color: #fff;
    font-size: 11.500px;
    font-weight: bold;
    letter-spacing: 1.05px;
}
.mode-picker {
    display: flex;
    align-items: flex-start;
    margin-left: 90px;
    padding-top: 8px;
}
.mode-label {
    margin: 7px 2px 0 0;
    line-height: 12px;
}
.mode-select {
    display: flex;
    justify-content: space-between;
    width: 69px;
    height: 21px;
    padding: 2px;
}
.mode-value {
    padding-left: 2px;
    font-family: "DejaVu Sans", sans-serif;
    font-size: 12px;
    line-height: 15px;
}

.page {
    display: grid;
    flex: 1;
    grid-template-columns: 192px 5px 250px 4px 25px 728px 12px 11px 1fr;
    overflow: hidden;
    background: #d6d6d6;
}
.page-band {
    background: linear-gradient(90deg, #c8c8c8, #cccccc 60%, #d3d1d4);
}
.page-band-wide {
    width: 11px;
}
.page-content {
    display: flex;
    flex-direction: column;
    border-left: 1px solid #bcbcbc;
    border-right: 1px solid #bcbcbc;
    min-height: 0;
    overflow: hidden;
}
.editor-choice {
    display: flex;
    flex: none;
    align-items: center;
    height: 14px;
    margin: -4px 0 0 65px;
    color: #8a8a8a;
    font-size: 12px;
    letter-spacing: 0.13px;
}
.choice-label {
    width: 177px;
    font-weight: bold;
    color: #7c7c7c;
}
.help-ico {
    width: 12px;
    height: 13px;
    background: #88b4dc;
    border-radius: 2px;
}
.radio {
    width: 11px;
    height: 11px;
    margin: 0 14px 0 23px;
    border: 1px solid #9a9a9a;
    border-radius: 50%;
}
.radio-on {
    margin-left: 25px;
    margin-right: 15px;
    background: radial-gradient(#555 30%, #d6d6d6 35%);
}
.editor-toolbars {
    display: flex;
    flex: none;
    flex-direction: column;
    gap: 2px;
    width: 625px;
    height: 82px;
    margin: 12px 0 0 65px;
    padding: 1px 2px;
    background: #cfcfcf;
}
.tb-row {
    display: flex;
    gap: 1px;
    height: 25px;
}
.tb-group {
    display: flex;
    align-items: center;
    padding: 0 3px 0 3px;
    border: 1px solid #a8a8a8;
    border-radius: 3px;
    background: linear-gradient(#dcdcdc, #d0d0d0 60%, #bcbcbc);
}
.tb-edit {
    width: 212px;
}
.tb-css {
    padding: 0 2px;
}
.tb-btn {
    display: flex;
    flex: none;
    align-items: center;
    justify-content: center;
    width: 24px;
    height: 22px;
    color: #666;
    font-size: 11px;
}
.tb-btn svg {
    width: 16px;
    height: 16px;
    opacity: 0.75;
}
.tb-arrow {
    display: flex;
    flex: none;
    align-items: center;
    justify-content: center;
    width: 9px;
}
.tb-row3 .tb-arrow {
    width: 10px;
}
.tb-arrow .caret {
    border-left-width: 3px;
    border-right-width: 3px;
    border-top-width: 3px;
    border-top-color: #555;
}
.tb-sep {
    flex: none;
    width: 1px;
    height: 20px;
    margin: 0 3px 0 2px;
    background: #aaa;
}
.tb-bold,
.tb-ital,
.tb-under {
    font-family: "Liberation Serif", serif;
    font-size: 14px;
}
.tb-bold {
    font-weight: bold;
    color: #555;
}
.tb-ital {
    font-style: italic;
}
.tb-under {
    text-decoration: underline;
}
.tb-strike {
    font-family: "Liberation Serif", serif;
    font-size: 12px;
    text-decoration: line-through;
}
.tb-script {
    font-weight: bold;
    font-size: 14px;
    color: #555;
}
.tb-script sup,
.tb-script sub {
    font-size: 7px;
    font-weight: normal;
}
.tb-fract {
    font-family: "Liberation Serif", serif;
    font-size: 13px;
}
.tb-fract small {
    position: relative;
    font-size: 9px;
    color: #5a78a8;
}
.fract-low {
    top: 4px;
}
.fract-high {
    top: -3px;
}
.tb-color {
    font-family: "Liberation Serif", serif;
    font-size: 17px;
    font-weight: bold;
    color: #5a78a8;
}
.tb-omega {
    font-family: "Liberation Serif", serif;
    font-size: 19px;
    font-weight: bold;
    color: #5a78a8;
}
.tb-size {
    display: flex;
    flex: none;
    align-items: center;
    justify-content: space-between;
    width: 37px;
    height: 22px;
    margin-left: 2px;
    padding: 0 4px;
    background: #d6d6d6;
    border: 1px solid #b0b0b0;
    color: #777;
}
.tb-size .caret,
.tb-css-select .caret {
    border-left-width: 3px;
    border-right-width: 3px;
    border-top-width: 3px;
    border-top-color: #444;
}
.tb-css-select {
    display: flex;
    align-items: center;
    justify-content: space-between;
    width: 96px;
    height: 21px;
    padding: 0 4px;
    background: #d6d6d6;
    border: 1px solid #b0b0b0;
    color: #666;
    font-size: 11.500px;
    white-space: nowrap;
}
.editor-area {
    flex: none;
    width: 621px;
    height: 291px;
    margin-left: 67px;
    padding: 3px;
    border: 1px solid #9c9c9c;
    border-bottom: 0;
}
.editor-selection {
    display: inline-block;
    padding: 0 1px;
    background: #4a5b8c;
    color: #d8d8d8;
    font-family: "Liberation Serif", serif;
    font-size: 14.500px;
    line-height: 19px;
}
.editor-foot {
    flex: none;
    height: 27px;
    margin-left: 65px;
    background: #cfcfcf;
    border-top: 1px solid #a8a8a8;
}
.editor-gap {
    flex: none;
    height: 41px;
    margin-left: 65px;
    border-bottom: 1px solid #a8a8a8;
    border-top: 1px solid #c4c4c4;
}
.section {
    display: flex;
    flex: none;
    align-items: center;
    height: 53px;
    margin: 0 16px 0 46px;
    padding: 19px 0 4px 2px;
    border-bottom: 1px solid #8c8c8c;
}
.section-plus {
    position: relative;
    flex: none;
    width: 9px;
    height: 9px;
    margin: 4px 7px 0 0;
    background: #d6d6d6;
    border: 1px solid #8a8a8a;
}
.section-plus::after {
    content: "";
    position: absolute;
    inset: 1px 3px;
    background: #666;
}
.section-plus::before {
    content: "";
    position: absolute;
    inset: 3px 1px;
    background: #666;
}
.section-title {
    color: #727272;
    font-size: 20px;
    line-height: 24px;
}

.scrollbar {
    display: flex;
    flex: none;
    flex-direction: column;
    width: 16px;
}
.scroll-btn {
    display: flex;
    flex: none;
    align-items: center;
    justify-content: center;
    width: 16px;
    height: 16px;
}
.scrollbar .scroll-thumb {
    height: 260px;
    margin-top: 157px;
    margin-bottom: auto;
}

/* status bar */
.statusbar {
    display: flex;
    align-items: center;
    height: 24px;
    margin-top: 0;
    padding: 1px 0 3px;
    border-top: 2px solid #fff;
    color: #000;
}
.status-warn {
    flex: none;
    width: 16px;
    height: 16px;
    margin: 0 3px 0 2px;
}
.status-text {
    width: 922px;
}
.status-cell {
    width: 24px;
    height: 18px;
    border: 1px solid;
    border-color: #a0a0a0 #fff #fff #a0a0a0;
}
.status-zone {
    display: flex;
    align-items: center;
    width: 251px;
    height: 18px;
    padding-left: 2px;
    border: 1px solid;
    border-color: #a0a0a0 #fff #fff #a0a0a0;
}
.status-globe {
    flex: none;
    width: 16px;
    height: 16px;
    margin-right: 3px;
}
.status-zoom {
    display: flex;
    align-items: center;
    width: 80px;
    height: 18px;
    margin-left: 2px;
    padding-left: 4px;
    border: 1px solid;
    border-color: #a0a0a0 #fff #fff #a0a0a0;
}
.status-mag {
    flex: none;
    width: 14px;
    height: 14px;
    margin-right: 2px;
}
.status-caret {
    margin-left: 16px;
    border-left-width: 3px;
    border-right-width: 3px;
    border-top-width: 3px;
}
.status-grip {
    width: 12px;
    height: 12px;
    margin-top: 6px;
}

/* task bar */
.taskbar {
    display: flex;
    align-items: center;
    height: 28px;
    padding: 3px 2px 2px;
    border-top: 1px solid #fff;
}
.start-btn {
    display: flex;
    align-items: center;
    width: 51px;
    height: 21px;
    padding-left: 2px;
    font-size: 12px;
    font-weight: bold;
    letter-spacing: -0.1px;
}
.start-flag {
    flex: none;
    width: 16px;
    height: 16px;
    margin-right: 0;
}
.task-divider {
    flex: none;
    width: 2px;
    height: 20px;
    margin-left: 8px;
    border: 1px solid;
    border-color: #fff #808080 #808080 #fff;
}
.ql-ico {
    flex: none;
    width: 16px;
    height: 16px;
}
.ql-server { margin-left: 8px; }
.ql-desk { margin-left: 6px; }
.ql-ie { margin-left: 8px; }
.task-divider-2 {
    margin-left: 34px;
}
.task-btn {
    display: flex;
    flex: none;
    align-items: center;
    width: 159px;
    height: 22px;
    margin-left: 4px;
    padding-left: 3px;
}
.task-on {
    border: 1px solid;
    border-color: #404040 #fff #fff #404040;
    font-weight: bold;
}
.task-ico {
    flex: none;
    width: 16px;
    height: 16px;
    margin-right: 3px;
}
.task-label {
    white-space: nowrap;
}
.tray {
    display: flex;
    align-items: center;
    margin-left: auto;
}
.tray-lang {
    margin: 0 6px 0 9px;
    font-size: 12px;
}
.tray-line {
    width: 1px;
    height: 20px;
    background: #808080;
}
.tray-kbd {
    flex: none;
    width: 18px;
    height: 18px;
    margin: 0 5px 0 3px;
}
.tray-box {
    display: flex;
    align-items: center;
    width: 66px;
    height: 21px;
    padding-left: 4px;
    border: 1px solid;
    border-color: #808080 #fff #fff #808080;
}
.tray-more {
    width: 26px;
    font-size: 14px;
    font-weight: bold;
    line-height: 14px;
}
.tray-ico {
    flex: none;
    width: 16px;
    height: 16px;
    margin-right: 2px;
}
.tooltip {
    position: absolute;
    left: 436px;
    top: 860px;
    width: 204px;
    height: 16px;
    padding-left: 1px;
    background: #ffffe1;
    border: 1px solid #000;
    letter-spacing: -0.17px;
    line-height: 14px;
    white-space: nowrap;
}

/* hyperlink manager dialog */
.link-manager {
    position: absolute;
    left: 508px;
    top: 308px;
    width: 408px;
    height: 340px;
    padding: 0 5px;
    background: linear-gradient(#fff, #f3f1f6 30px);
    border: 1px solid #8a8a8a;
    border-radius: 6px;
    font-family: "Noto Sans", sans-serif;
    font-size: 11.300px;
}
.lm-head {
    display: flex;
    align-items: center;
    height: 28px;
    padding: 4px 7px 0 2px;
}
.lm-ico {
    flex: none;
    width: 16px;
    height: 16px;
    margin-right: 5px;
}
.lm-title {
    font-family: "Liberation Sans", sans-serif;
    font-size: 12px;
    font-weight: bold;
    letter-spacing: -0.1px;
}
.lm-close {
    width: 13px;
    height: 11px;
    margin-left: auto;
    background: #6a6a6a;
    border-radius: 2px;
    color: #eee;
    font-size: 11px;
    line-height: 10px;
    text-align: center;
}
.lm-body {
    height: 305px;
    background: #fff;
    border: 1px solid #8a8a8a;
    color: #333;
}
.lm-tabs {
    display: flex;
    height: 34px;
    margin: 0 1px;
    padding: 9px 0 0 8px;
    background: #f5f3f8;
    border-bottom: 1px solid #8a8a8a;
}
.lm-tab {
    position: relative;
    flex: none;
    height: 25px;
    margin-left: -8px;
    padding: 5px 0 0 18px;
    line-height: 16px;
}
.lm-tab svg {
    position: absolute;
    left: 0;
    top: 0;
}
.lm-tab span {
    position: relative;
}
.lm-tab:first-child { margin-left: 0; }
.lm-tab-1 { width: 98px; z-index: 4; }
.lm-tab-2 { width: 84px; z-index: 3; }
.lm-tab-3 { width: 81px; z-index: 2; }
.lm-tab-4 { width: 82px; z-index: 1; }
.lm-form {
    height: 234px;
    margin: 0 1px;
    padding-top: 24px;
    border-bottom: 1px solid #8a8a8a;
}
.lm-row {
    display: flex;
    align-items: flex-start;
}
.lm-row label {
    flex: none;
    width: 93px;
    margin-right: 6px;
    line-height: 20px;
    text-align: right;
}
.lm-row-page { height: 28px; }
.lm-row-url { height: 32px; }
.lm-row-text { height: 30px; }
.lm-row-target { height: 28px; }
.lm-row-anchor { height: 29px; }
.lm-row-tip { height: 30px; }
.lm-row-css { height: 32px; }
.lm-row-url label { padding-top: 2px; }
.lm-row-text label { padding-top: 1px; }
.lm-combo {
    display: flex;
    align-items: center;
    justify-content: flex-end;
    height: 21px;
    padding-right: 5px;
    border: 1px solid #a8a8a8;
    border-radius: 2px;
}
.lm-wide {
    width: 245px;
}
.sunken-light {
    border: 1px solid;
    border-color: #555 #d4d0c8 #d4d0c8 #555;
    border-top-width: 2px;
}
.lm-input {
    height: 21px;
}
.lm-url {
    width: 217px;
    margin-top: 2px;
}
.lm-doc-btn {
    display: flex;
    align-items: center;
    justify-content: center;
    width: 24px;
    height: 23px;
    margin-left: 5px;
    border: 1px solid #b0b0b0;
    border-radius: 2px;
}
.lm-doc-a {
    font-size: 7px;
    font-family: "Liberation Sans", sans-serif;
    fill: #23488c;
}
.lm-select {
    display: flex;
    justify-content: space-between;
    width: 248px;
    height: 21px;
    padding-left: 4px;
    color: #000;
    border-right: 1px solid #d4d0c8;
    font-size: 12px;
    line-height: 17px;
}
.lm-cssclass {
    display: flex;
    align-items: center;
    justify-content: space-between;
    width: 96px;
    height: 22px;
    padding: 0 4px;
    border: 1px solid #a8a8a8;
    color: #000;
    font-size: 11.700px;
}
.lm-cssclass .caret {
    border-left-width: 3px;
    border-right-width: 3px;
    border-top-width: 3px;
}
.lm-foot {
    display: flex;
    align-items: center;
    gap: 4px;
    padding: 15px 0 0 8px;
}
.lm-check {
    width: 12px;
    height: 12px;
    margin-top: -3px;
    border: 1px solid;
    border-color: #444 #c8c8c8 #c8c8c8 #444;
}

/* script error dialog */
.error-dialog {
    position: absolute;
    left: 952px;
    top: 351px;
    width: 437px;
    height: 282px;
    padding: 1px 2px;
    background: #d4d0c8;
    border: 1px solid;
    border-color: #d4d0c8 #404040 #404040 #d4d0c8;
    box-shadow: inset 1px 1px 0 #fff, inset -1px -1px 0 #808080;
}
.ed-title {
    display: flex;
    align-items: center;
    height: 18px;
    padding-left: 1px;
    background: #0a246a;
    color: #fff;
    font-size: 11.500px;
    font-weight: bold;
    letter-spacing: 0.35px;
}
.ed-logo {
    flex: none;
    width: 16px;
    height: 16px;
    margin-right: 2px;
}
.ed-close {
    margin-left: auto;
    margin-right: 2px;
}
.ed-main {
    display: flex;
    height: 74px;
    padding: 9px 0 0 12px;
    letter-spacing: -0.22px;
}
.ed-warn {
    flex: none;
    width: 32px;
    height: 32px;
    margin: 5px 12px 0 0;
}
.ed-message p {
    width: 356px;
    margin: 0;
    line-height: 13px;
}
.ed-check-row {
    display: flex;
    align-items: center;
    gap: 6px;
    margin-top: 10px;
}
.ed-check {
    flex: none;
    width: 13px;
    height: 13px;
    background: #fff;
    border: 1px solid;
    border-color: #808080 #fff #fff #808080;
    box-shadow: inset 1px 1px 0 #404040, inset -1px -1px 0 #d4d0c8;
}
.ed-actions {
    display: flex;
    justify-content: flex-end;
    gap: 5px;
    height: 23px;
    margin-top: 13px;
    padding-right: 16px;
}
.ed-btn {
    display: flex;
    align-items: center;
    justify-content: center;
    width: 85px;
    height: 23px;
}
.ed-btn-default {
    padding: 2px;
    background: #d4d0c8;
    border: 1px solid #000;
    box-shadow: inset 1px 1px 0 #fff, inset -1px -1px 0 #404040;
}
.ed-focus {
    flex: 1;
    margin: 1px;
    border: 1px dotted #000;
    line-height: 15px;
    text-align: center;
}
.ed-rule {
    height: 2px;
    margin: 11px 16px 0 12px;
    background: #9c9a94;
    border-bottom: 1px solid #fff;
}
.ed-details {
    position: relative;
    width: 404px;
    height: 86px;
    margin: 12px 0 0 12px;
    border: 2px solid;
    border-color: #808080 #fff #fff #808080;
    box-shadow: inset 2px 2px 0 #404040, inset -1px -1px 0 #d4d0c8;
}
.ed-lines {
    padding: 5px 0 0 7px;
    letter-spacing: -0.2px;
    line-height: 15px;
}
.ed-line {
    display: flex;
}
.ed-key {
    flex: none;
    width: 29px;
}
.ed-vscroll {
    position: absolute;
    right: 2px;
    top: 2px;
    display: flex;
    flex-direction: column;
    width: 16px;
    height: 62px;
}
.ed-vthumb {
    flex: none;
    height: 14px;
}
.ed-vdown {
    margin-top: auto;
}
.ed-hscroll {
    position: absolute;
    left: 2px;
    top: 64px;
    display: flex;
    width: 380px;
    height: 16px;
}
.ed-hthumb {
    flex: none;
    width: 47px;
    height: 16px;
}
.ed-hright {
    margin-left: auto;
}
.ed-actions-nav {
    margin-top: 7px;
    padding-right: 15px;
}
.ed-disabled {
    color: #9c9a94;
    text-shadow: 1px 1px 0 #fff;
}
```
